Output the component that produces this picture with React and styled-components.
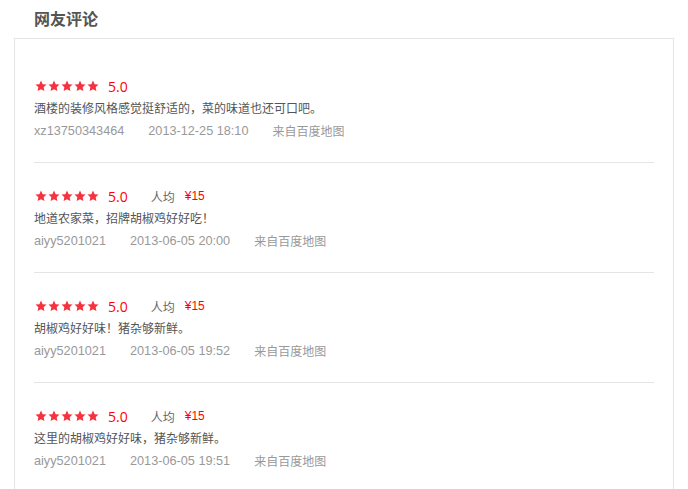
import React from "react";
import styled, { createGlobalStyle } from "styled-components";

const Global = createGlobalStyle`
  html, body { margin: 0; padding: 0; background: #fff; }
  body { font-family: "Noto Sans CJK SC", "Liberation Sans", sans-serif; }
`;

const Page = styled.div`
  padding: 0 14px;
  width: 660px;
`;

const TitleBar = styled.div`
  display: flex;
  align-items: center;
  height: 38px;
  padding-left: 20px;
`;

const Title = styled.h2`
  margin: 0;
  font-size: 16px;
  line-height: 20px;
  font-weight: bold;
  color: #555;
  margin-top: -2px;
`;

const Box = styled.div`
  border: 1px solid #e5e5e5;
  padding: 14px 19px 0 19px;
  height: 460px;
`;

const Item = styled.div`
  padding: 22px 0 20px;
  border-bottom: ${(p) => (p.last ? "none" : "1px solid #e5e5e5")};
`;

const RatingRow = styled.div`
  display: flex;
  align-items: center;
  height: 22px;
`;

const Stars = styled.div`
  display: flex;
  gap: 1px;
  margin-left: 1px;
`;

const Score = styled.span`
  margin-left: 9px;
  font-family: "Open Sans", "Liberation Sans", sans-serif;
  font-size: 14px;
  color: #f00;
`;

const AvgLabel = styled.span`
  margin-left: 23px;
  font-size: 12px;
  color: #666;
`;

const Price = styled.span`
  margin-left: 10px;
  font-size: 12px;
  color: #f00;
  font-family: "Liberation Sans", sans-serif;
`;

const Text = styled.div`
  height: 22px;
  line-height: 22px;
  font-size: 12px;
  color: #555;
`;

const Meta = styled.div`
  display: flex;
  gap: 24px;
  height: 23px;
  line-height: 24px;
  font-size: 12px;
  color: #999;
`;

const Latin = styled.span`
  font-family: "Liberation Sans", sans-serif;
  font-size: 12.7px;
`;

const Star = () => (
  <svg width="12" height="12" viewBox="0 0 24 24">
    <path
      d="M12 1.2l3.3 7.1 7.7.9-5.7 5.3 1.5 7.7L12 18.3l-6.8 3.9 1.5-7.7L1 9.2l7.7-.9z"
      fill="#f5333f"
    />
  </svg>
);

const reviews = [
  {
    text: "酒楼的装修风格感觉挺舒适的，菜的味道也还可口吧。",
    user: "xz13750343464",
    time: "2013-12-25 18:10",
  },
  {
    price: "¥15",
    text: "地道农家菜，招牌胡椒鸡好好吃！",
    user: "aiyy5201021",
    time: "2013-06-05 20:00",
  },
  {
    price: "¥15",
    text: "胡椒鸡好好味！猪杂够新鲜。",
    user: "aiyy5201021",
    time: "2013-06-05 19:52",
  },
  {
    price: "¥15",
    text: "这里的胡椒鸡好好味，猪杂够新鲜。",
    user: "aiyy5201021",
    time: "2013-06-05 19:51",
  },
];

export default function App() {
  return (
    <Page>
      <Global />
      <TitleBar>
        <Title>网友评论</Title>
      </TitleBar>
      <Box>
        {reviews.map((r, i) => (
          <Item key={i} last={i === reviews.length - 1}>
            <RatingRow>
              <Stars>
                {[0, 1, 2, 3, 4].map((k) => (
                  <Star key={k} />
                ))}
              </Stars>
              <Score>5.0</Score>
              {r.price && (
                <>
                  <AvgLabel>人均</AvgLabel>
                  <Price>{r.price}</Price>
                </>
              )}
            </RatingRow>
            <Text>{r.text}</Text>
            <Meta>
              <Latin>{r.user}</Latin>
              <Latin>{r.time}</Latin>
              <span>来自百度地图</span>
            </Meta>
          </Item>
        ))}
      </Box>
    </Page>
  );
}
